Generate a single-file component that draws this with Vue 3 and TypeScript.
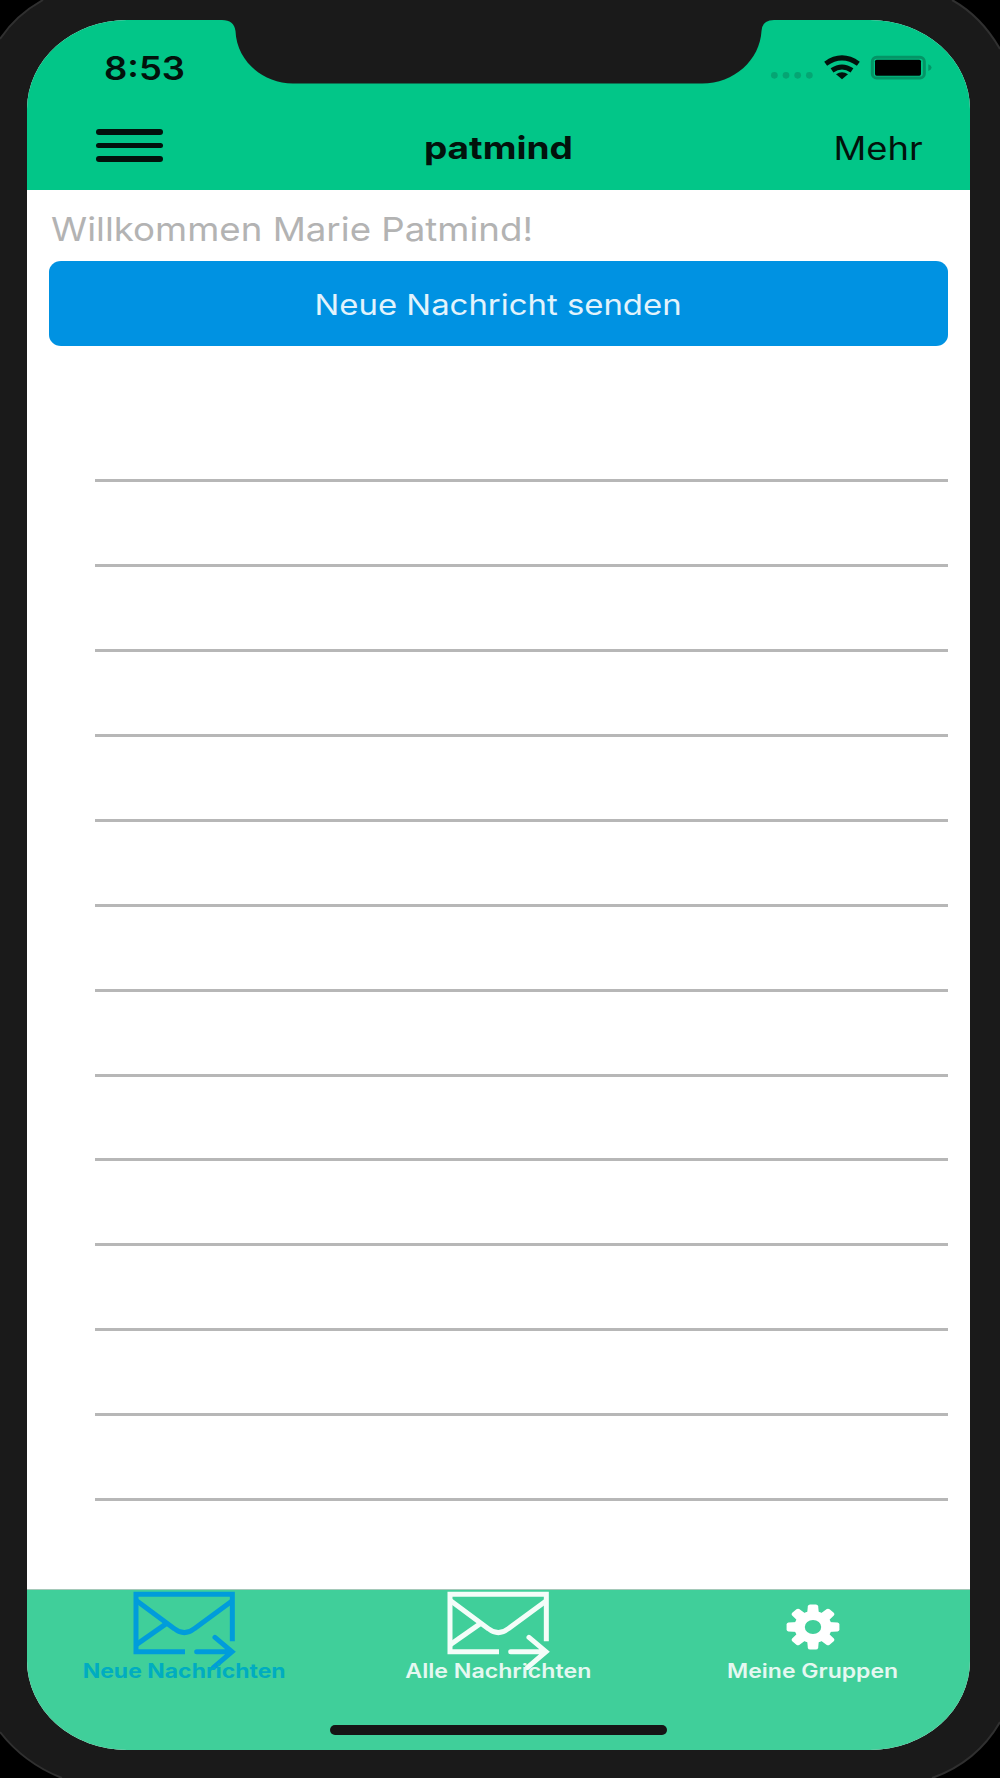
<script setup lang="ts">
import type { Directive } from 'vue'

interface Tab {
  label: string
  icon: 'mail' | 'gear'
  width: number
  active: boolean
}

const tabs: Tab[] = [
  { label: 'Neue Nachrichten', icon: 'mail', width: 203, active: true },
  { label: 'Alle Nachrichten', icon: 'mail', width: 186, active: false },
  { label: 'Meine Gruppen', icon: 'gear', width: 171, active: false },
]

const rows = 13
const teeth = [0, 45, 90, 135, 180, 225, 270, 315]

// Widens a label horizontally to the given width in pixels.
const vFit: Directive<HTMLElement, number> = {
  mounted(el, binding) {
    el.style.transform = `scaleX(${binding.value / el.getBoundingClientRect().width})`
  },
}
</script>

<template>
  <div class="device">
    <svg class="corners" viewBox="0 0 1000 1778" width="1000" height="1778">
      <g class="outside">
        <path d="M0 39Q16 15 43 0H0Z" />
        <path d="M952 0Q981 16 1000 49V0Z" />
        <path d="M0 1732Q24 1763 62 1778H0Z" />
        <path d="M932 1778Q977 1762 1000 1722V1778Z" />
      </g>
      <g class="rim">
        <path d="M0 39Q16 15 43 0" />
        <path d="M952 0Q981 16 1000 49" />
        <path d="M0 1732Q24 1763 62 1778" />
        <path d="M932 1778Q977 1762 1000 1722" />
      </g>
    </svg>

    <div class="screen">
      <header class="header">
        <div class="status">
          <span v-fit="81" class="fit clock">8:53</span>
          <svg class="indicators" viewBox="300 160 490 86" width="163.33" height="28.67">
            <g fill="#05a573">
              <circle cx="313" cy="227" r="10" />
              <circle cx="348" cy="227" r="10" />
              <circle cx="383" cy="227" r="10" />
              <circle cx="418" cy="227" r="10" />
            </g>
            <g fill="none" stroke="#02120c" stroke-width="15">
              <path d="M467 192Q516 157 565 192" />
              <path d="M486 212Q516 192 546 212" />
            </g>
            <path d="M498 224Q516 211 534 224L516 239Z" fill="#02120c" />
            <rect x="607" y="173" width="156" height="62" rx="13" fill="none" stroke="#049466" stroke-width="9" />
            <rect x="615" y="180" width="138" height="48" rx="5" fill="#000" />
            <path d="M775 194Q785 198 785 204Q785 210 775 214Z" fill="#049668" />
          </svg>
        </div>
        <nav class="navbar">
          <div class="side">
            <div class="menu"><i></i><i></i><i></i></div>
          </div>
          <span v-fit="149" class="fit title">patmind</span>
          <div class="side end">
            <span v-fit="89" class="fit more">Mehr</span>
          </div>
        </nav>
      </header>

      <main class="content">
        <div class="welcome"><span v-fit="482" class="fit">Willkommen Marie Patmind!</span></div>
        <button class="send"><span v-fit="367" class="fit">Neue Nachricht senden</span></button>
        <div class="list">
          <div v-for="n in rows" :key="n" class="row"></div>
        </div>
      </main>

      <footer class="tabbar">
        <div class="tabs">
          <div v-for="tab in tabs" :key="tab.label" class="tab" :class="{ active: tab.active }">
            <div class="icon">
              <svg v-if="tab.icon === 'mail'" class="mail" viewBox="396 90 314 240" width="104.67" height="80">
                <g fill="none" stroke="currentColor" stroke-width="15">
                  <path d="M697 244V103H408V275H555" />
                  <path d="M410 122L523 206Q553 230 583 206L697 122" />
                  <path d="M500 190L410 253" />
                  <path d="M590 275H694M645 232L696 275L640 323" stroke-linecap="round" />
                </g>
              </svg>
              <svg v-else class="gear" viewBox="-23 -23 46 46" width="54" height="46" preserveAspectRatio="none">
                <path
                  fill-rule="evenodd"
                  fill="currentColor"
                  d="M0-16A16 16 0 1 1 0 16A16 16 0 1 1 0-16ZM0-7A7 7 0 1 0 0 7A7 7 0 1 0 0-7Z"
                />
                <path
                  v-for="a in teeth"
                  :key="a"
                  fill="currentColor"
                  :transform="`rotate(${a})`"
                  d="M-5-13L-4.400-21Q-4-22.500-2.500-22.500H2.500Q4-22.500 4.400-21L5-13Z"
                />
              </svg>
            </div>
            <span v-fit="tab.width" class="fit label">{{ tab.label }}</span>
          </div>
        </div>
        <div class="home"></div>
      </footer>
    </div>

    <svg class="notch" viewBox="215 10 570 75" width="570" height="75">
      <path d="M215 10V20H222Q234 20 235.500 31C236.500 60 262 83.500 293 83.500H702C734 83.500 760 60 761.500 31Q762 20 774 20H785V10Z" />
    </svg>
  </div>
</template>

<style>
body {
  margin: 0;
  background: #000;
}
</style>

<style scoped>
.device {
  position: relative;
  box-sizing: border-box;
  width: 1000px;
  height: 1778px;
  padding: 20px 30px 28px 27px;
  overflow: hidden;
  background: #1a1a1a;
  font-family: Inter, "Liberation Sans", sans-serif;
}

.corners {
  position: absolute;
  top: 0;
  left: 0;
}

.outside {
  fill: #000;
}

.rim {
  fill: none;
  stroke: #303030;
  stroke-width: 2;
}

.notch {
  position: absolute;
  top: 10px;
  left: 215px;
  fill: #1a1a1a;
}

.screen {
  position: relative;
  display: flex;
  flex-direction: column;
  height: 1730px;
  overflow: hidden;
  border-radius: 100px / 89px;
  background: #fff;
}

.fit {
  display: inline-block;
  white-space: nowrap;
  transform-origin: center;
}

.header {
  flex: none;
  height: 170px;
  background: #02c688;
  color: #02120c;
}

.status {
  display: flex;
  align-items: center;
  justify-content: space-between;
  height: 96px;
  padding: 0 37px 0 77px;
}

.clock {
  font-size: 32px;
  font-weight: 600;
  transform-origin: left;
}

.indicators {
  display: block;
  margin-top: -2px;
}

.navbar {
  display: grid;
  grid-template-columns: 1fr auto 1fr;
  align-items: center;
  height: 64px;
}

.side {
  padding-left: 69px;
}

.side.end {
  padding: 0 47px 0 0;
  text-align: right;
}

.menu {
  display: flex;
  flex-direction: column;
  gap: 8px;
  width: 67px;
  margin-top: -5px;
}

.menu i {
  height: 5.500px;
  border-radius: 3px;
  background: #02120c;
}

.title {
  margin-top: -2px;
  font-size: 31.500px;
  font-weight: 700;
}

.more {
  font-size: 32px;
  transform-origin: right;
}

.content {
  flex: 1;
  padding: 18px 22.500px 0 22px;
}

.welcome {
  height: 52.500px;
  padding-left: 1.500px;
  line-height: 42px;
  color: #b3b3b3;
  font-size: 33px;
}

.welcome .fit {
  transform-origin: left;
}

.send {
  display: flex;
  align-items: center;
  justify-content: center;
  width: 100%;
  height: 85px;
  padding: 2px 0 0;
  border: 0;
  border-radius: 12px / 11px;
  background: #0092e2;
  color: #e2f3fc;
  font-family: inherit;
  font-size: 28.500px;
}

.list {
  padding: 51.500px 0 0 46px;
}

.row {
  box-sizing: border-box;
  height: 84.950px;
  border-bottom: 3px solid #b7b7b7;
}

.tabbar {
  display: flex;
  flex: none;
  flex-direction: column;
  align-items: center;
  justify-content: space-between;
  box-sizing: border-box;
  height: 161px;
  padding-bottom: 15px;
  border-top: 1px solid #a5c9b9;
  background: #40cf9a;
}

.tabs {
  display: flex;
  width: 100%;
}

.tab {
  display: flex;
  flex: 1 1 0;
  flex-direction: column;
  align-items: center;
  color: #f4fdf9;
}

.tab.active {
  color: #009cdb;
}

.icon {
  display: flex;
  align-items: flex-start;
  justify-content: center;
  height: 70.500px;
}

.mail {
  flex: none;
}

.gear {
  margin-top: 13.500px;
  color: #fff;
}

.label {
  color: #e5f8f1;
  font-size: 19.500px;
  font-weight: 600;
  line-height: 20px;
}

.active .label {
  color: #00acc0;
  font-weight: 700;
}

.home {
  width: 337px;
  height: 10px;
  border-radius: 5px;
  background: #151515;
}
</style>
